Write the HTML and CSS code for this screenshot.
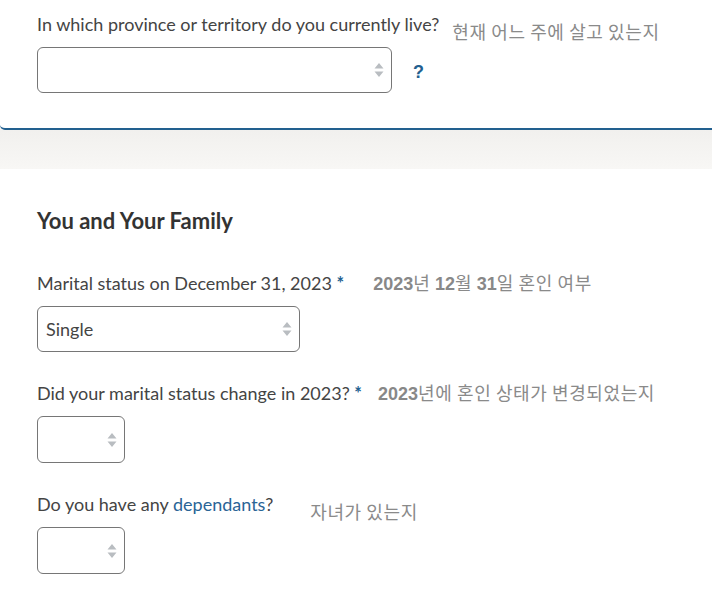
FILE: index.html
```html
<!DOCTYPE html>
<html lang="en">
<head>
<meta charset="utf-8">
<title>You and Your Family</title>
<link rel="stylesheet" href="styles.css">
</head>
<body>
<section class="card card-top">
  <div class="field">
    <div class="label-line">
      <span class="label">In which province or territory do you currently live?</span>
      <span class="kr kr-low kr-1">현재 어느 주에 살고 있는지</span>
    </div>
    <div class="control-line">
      <div class="select select-wide">
        <span class="select-value"></span>
        <svg class="arrows" width="10" height="16" viewBox="0 0 10 16"><path d="M5 1 L9.5 6.5 L0.5 6.5 Z M5 15 L9.5 9.5 L0.5 9.5 Z" fill="#b9bdc1"/></svg>
      </div>
      <span class="help">?</span>
    </div>
  </div>
</section>
<div class="band"></div>
<section class="card card-main">
  <h2 class="heading">You and Your Family</h2>
  <div class="field">
    <div class="label-line">
      <span class="label">Marital status on December 31, 2023 <span class="req">*</span></span>
      <span class="kr kr-2"><b class="num">2023</b>년 <b class="num">12</b>월 <b class="num">31</b>일 혼인 여부</span>
    </div>
    <div class="control-line">
      <div class="select select-mid">
        <span class="select-value">Single</span>
        <svg class="arrows" width="10" height="16" viewBox="0 0 10 16"><path d="M5 1 L9.5 6.5 L0.5 6.5 Z M5 15 L9.5 9.5 L0.5 9.5 Z" fill="#b9bdc1"/></svg>
      </div>
    </div>
  </div>
  <div class="field">
    <div class="label-line">
      <span class="label">Did your marital status change in 2023? <span class="req">*</span></span>
      <span class="kr kr-3"><b class="num">2023</b>년에 혼인 상태가 변경되었는지</span>
    </div>
    <div class="control-line">
      <div class="select select-small">
        <span class="select-value"></span>
        <svg class="arrows" width="10" height="16" viewBox="0 0 10 16"><path d="M5 1 L9.5 6.5 L0.5 6.5 Z M5 15 L9.5 9.5 L0.5 9.5 Z" fill="#b9bdc1"/></svg>
      </div>
    </div>
  </div>
  <div class="field">
    <div class="label-line">
      <span class="label">Do you have any <a class="link" href="#">dependants</a>?</span>
      <span class="kr kr-low kr-4">자녀가 있는지</span>
    </div>
    <div class="control-line">
      <div class="select select-small">
        <span class="select-value"></span>
        <svg class="arrows" width="10" height="16" viewBox="0 0 10 16"><path d="M5 1 L9.5 6.5 L0.5 6.5 Z M5 15 L9.5 9.5 L0.5 9.5 Z" fill="#b9bdc1"/></svg>
      </div>
    </div>
  </div>
</section>
</body>
</html>
```

FILE: styles.css
```css
html, body {
  margin: 0;
  padding: 0;
}
body {
  background: #f6f5f3;
  font-family: "Lato", "Liberation Sans", sans-serif;
  color: #444444;
  width: 712px;
  overflow: hidden;
}
.card {
  background: #ffffff;
}
.card-top {
  padding: 12px 0 35px 37px;
  border-bottom: 2px solid #22608f;
  border-bottom-left-radius: 5px;
}
.band {
  height: 39px;
  background: linear-gradient(#f1f0ee, #f8f7f5);
}
.card-main {
  padding: 38px 0 40px 37px;
}
.heading {
  margin: 0 0 36px 0;
  font-size: 22px;
  line-height: 28px;
  font-weight: 700;
  color: #333333;
}
.field {
  margin-bottom: 29px;
}
.field:last-child {
  margin-bottom: 0;
}
.label-line {
  display: flex;
  align-items: center;
  height: 24px;
  white-space: nowrap;
}
.label {
  font-size: 18px;
  line-height: 24px;
  font-weight: 400;
  color: #444444;
}
.req {
  color: #22608f;
  font-weight: 700;
}
.link {
  color: #2a6496;
  text-decoration: none;
}
.kr {
  font-family: "Noto Sans CJK KR", sans-serif;
  font-size: 18px;
  letter-spacing: 0.6px;
  line-height: 24px;
  color: #8a8a8a;
}
.num {
  font-family: "Liberation Sans", sans-serif;
  font-weight: 700;
  letter-spacing: 0;
  color: #888888;
}
.kr-low {
  position: relative;
  top: 7px;
}
.kr-1 { margin-left: 13px; }
.kr-2 { margin-left: 29px; }
.kr-3 { margin-left: 16px; }
.kr-4 { margin-left: 37px; }
.control-line {
  display: flex;
  align-items: center;
  margin-top: 11px;
}
.select {
  box-sizing: border-box;
  height: 46px;
  border: 1px solid #767676;
  border-radius: 6px;
  background: #ffffff;
  display: flex;
  align-items: center;
  justify-content: space-between;
  padding: 0 7px 0 8px;
}
.select-wide { width: 355px; }
.select-mid { width: 263px; }
.select-small { width: 88px; height: 47px; }
.select-value {
  font-size: 18px;
  color: #444444;
}
.arrows {
  display: block;
}
.help {
  margin-left: 21px;
  font-family: "Liberation Sans", sans-serif;
  font-weight: 700;
  font-size: 18px;
  color: #22608f;
  position: relative;
  top: 2px;
}
```
